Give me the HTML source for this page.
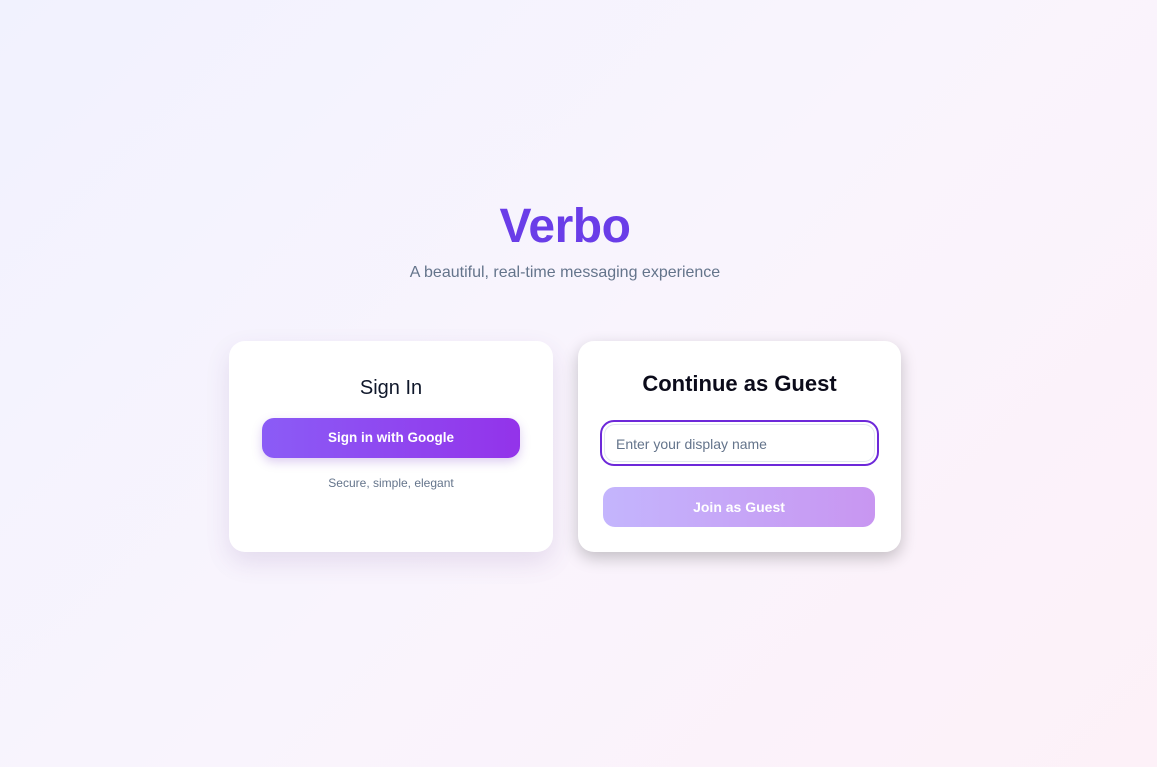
<!DOCTYPE html>
<html><head><meta charset="utf-8"><style>
*{box-sizing:border-box;margin:0;padding:0}
body{width:1157px;height:767px;overflow:hidden;font-family:"Liberation Sans",sans-serif;background:linear-gradient(135deg,#f1f2fe 0%,#f9f4fd 50%,#fdf1f8 100%);position:relative}
h1{position:absolute;top:199px;left:0;width:1130px;text-align:center;font-size:48px;font-weight:bold;color:#6a3de8;letter-spacing:-0.5px}
.sub{position:absolute;top:264px;left:0;width:1130px;text-align:center;font-size:16px;color:#64748b}
.card{position:absolute;background:#fff;border-radius:16px}
.c1{left:229px;top:341px;width:324px;height:211px;box-shadow:0 10px 25px rgba(80,40,120,0.12)}
.c2{left:578px;top:341px;width:323px;height:211px;box-shadow:0 6px 16px rgba(0,0,0,0.22)}
.t1{position:absolute;top:377px;left:229px;width:324px;text-align:center;font-size:20px;color:#0f172a}
.b1{position:absolute;left:262px;top:418px;width:258px;height:40px;border-radius:12px;background:linear-gradient(90deg,#8b5cf6,#9333ea);color:#fff;font-weight:bold;font-size:13.5px;text-align:center;line-height:40px;box-shadow:0 4px 10px rgba(120,60,200,0.25)}
.s1{position:absolute;top:476px;left:229px;width:324px;text-align:center;font-size:12px;color:#64748b}
.t2{position:absolute;top:371px;left:578px;width:323px;text-align:center;font-size:22px;font-weight:bold;color:#0b0b1a}
.in{position:absolute;left:600px;top:420px;width:279px;height:46px;border:2px solid #6d28d9;border-radius:14px;padding:2px}
.in div{width:100%;height:100%;border:1px solid #e2e8f0;border-radius:11px;font-size:14px;color:#64748b;line-height:38px;padding-left:11px}
.b2{position:absolute;left:603px;top:487px;width:272px;height:40px;border-radius:12px;background:linear-gradient(90deg,#c4b5fd,#c896f1);color:#fff;font-weight:bold;font-size:14px;text-align:center;line-height:40px}
</style></head><body>
<h1>Verbo</h1>
<div class="sub">A beautiful, real-time messaging experience</div>
<div class="card c1"></div>
<div class="card c2"></div>
<div class="t1">Sign In</div>
<div class="b1">Sign in with Google</div>
<div class="s1">Secure, simple, elegant</div>
<div class="t2">Continue as Guest</div>
<div class="in"><div>Enter your display name</div></div>
<div class="b2">Join as Guest</div>
</body></html>
